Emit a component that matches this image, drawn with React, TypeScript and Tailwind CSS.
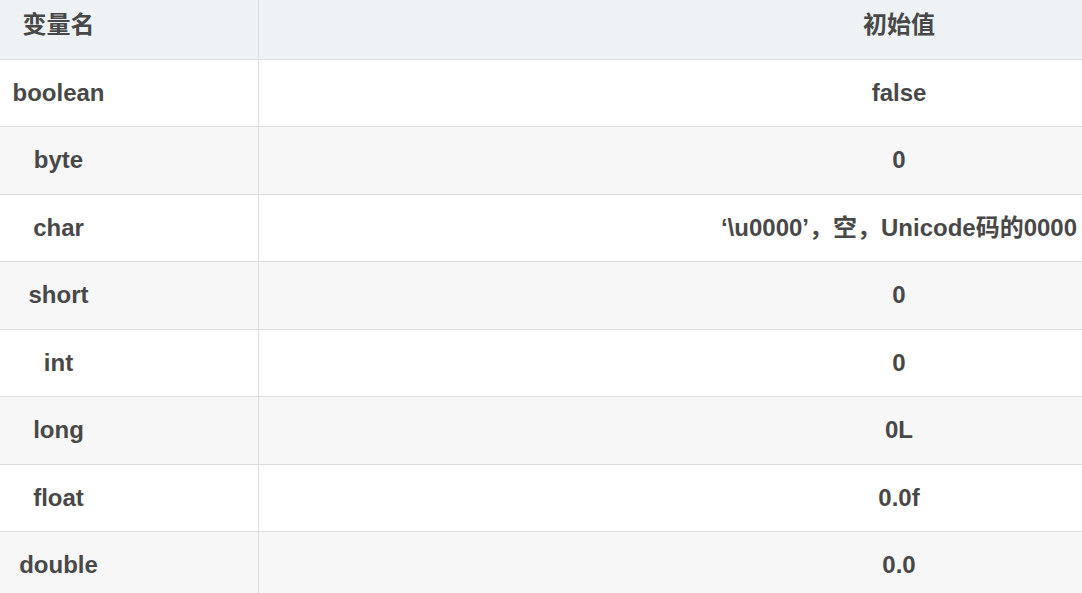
import React from 'react';

const rows: [string, string][] = [
    ['boolean', 'false'],
    ['byte', '0'],
    ['char', '‘\\u0000’，空，Unicode码的0000'],
    ['short', '0'],
    ['int', '0'],
    ['long', '0L'],
    ['float', '0.0f'],
    ['double', '0.0'],
];

const App: React.FC = () => {
    return (
        <div
            className="w-full h-[593px] overflow-hidden bg-white text-[#484848]"
            style={{ fontFamily: '"Liberation Sans", Arial, "Noto Sans CJK SC", sans-serif' }}
        >
            <div className="w-[1680px] -ml-[141px] -mt-2 text-[24px] font-bold">
                <div className="grid grid-cols-[400px_1280px] h-[67.5px] bg-[#eef2f4] border-b border-[#dddddd]">
                    <div className="flex items-center justify-center border-r border-[#dddddd]">变量名</div>
                    <div className="flex items-center justify-center">初始值</div>
                </div>
                {rows.map(([name, value], i) => (
                    <div
                        key={name}
                        className={`grid grid-cols-[400px_1280px] h-[67.5px] border-b border-[#dddddd] ${i % 2 === 1 ? 'bg-[#f7f7f7]' : 'bg-white'}`}
                    >
                        <div className="flex items-center justify-center border-r border-[#dddddd]">{name}</div>
                        <div className="flex items-center justify-center whitespace-nowrap">{value}</div>
                    </div>
                ))}
            </div>
        </div>
    );
};

export default App;
